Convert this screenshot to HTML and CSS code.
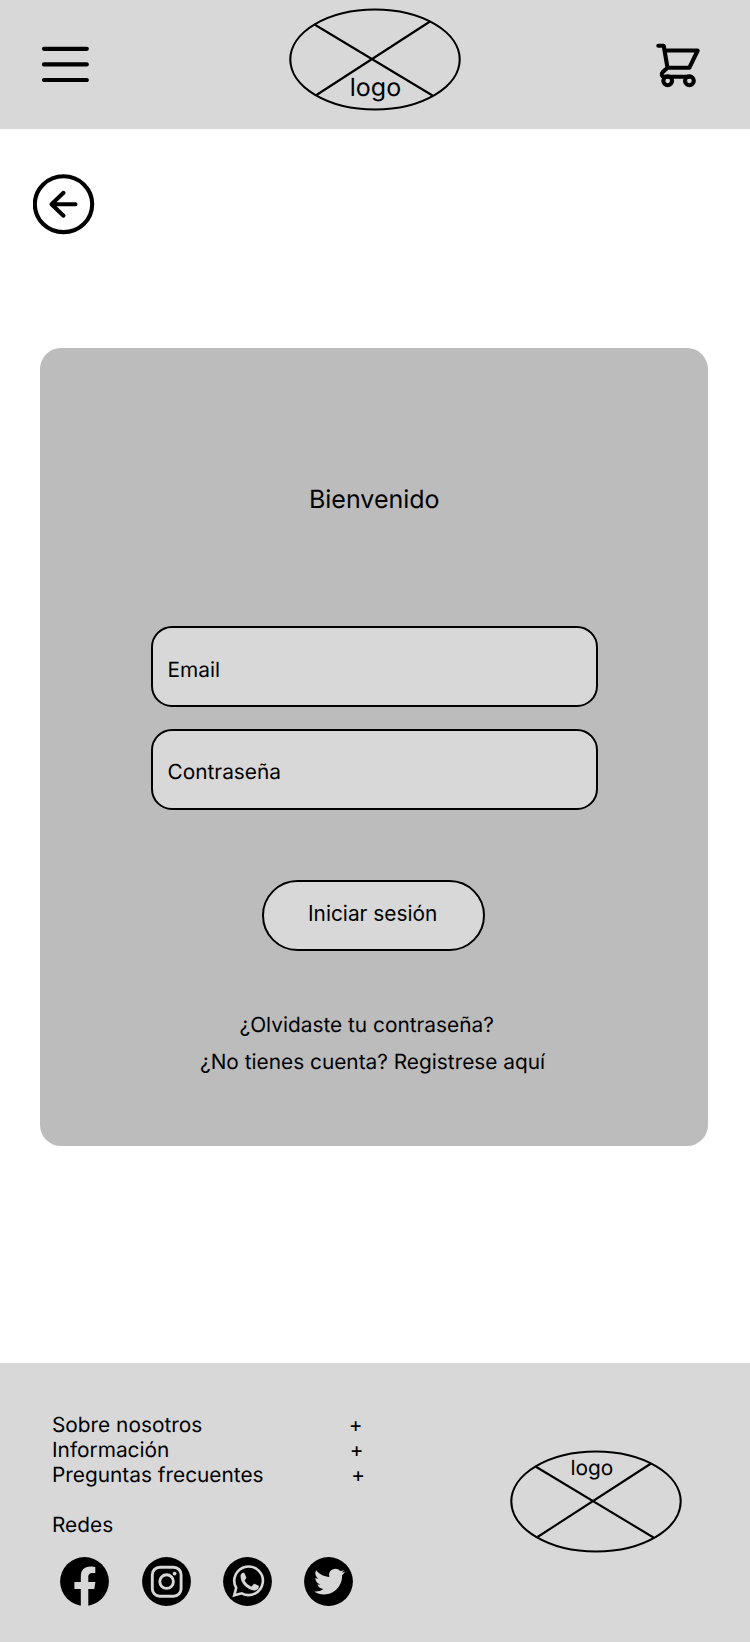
FILE: index.html
```html
<!DOCTYPE html>
<html lang="es">
<head>
<meta charset="utf-8">
<title>Bienvenido</title>
<link rel="stylesheet" href="styles.css">
</head>
<body>
<header class="header">
  <svg class="menu" width="48" height="36" viewBox="0 0 48 36"><path d="M3 2.8h42.8M3 18.4h42.8M3 34h42.8"/></svg>
  <svg class="logo" width="172" height="103" viewBox="0 0 172 103">
    <ellipse cx="86" cy="51.5" rx="84.7" ry="50"/>
    <path d="M25.5 16.5 143.5 87.5M141 13.5 27.5 87"/>
    <text class="logo-big" x="60.8" y="88">logo</text>
  </svg>
  <svg class="cart" width="46" height="46" viewBox="0 0 46 46"><path d="M3.3 3.7h5.4l3.8 22.1h21.8l8.4-17.3H9.7M12.5 25.8l-4.8 4.3c-2.2 2.4-.8 4.6 1.5 4.6h25"/><circle cx="12.7" cy="38.8" r="4.4"/><circle cx="34.4" cy="38.8" r="4.4"/></svg>
</header>
<main class="main">
  <a class="back" href="#" aria-label="Volver"><svg width="62" height="61" viewBox="0 0 62 61"><ellipse cx="30.5" cy="30.2" rx="28.7" ry="27.9"/><path d="M42.5 30.2H19M30.5 18.8 18.5 30.2 30.5 41.7"/></svg></a>
  <form class="card">
    <h1 class="title">Bienvenido</h1>
    <label class="field">Email</label>
    <label class="field password">Contraseña</label>
    <button class="submit" type="button">Iniciar sesión</button>
    <a class="link forgot" href="#">¿Olvidaste tu contraseña?</a>
    <a class="link register" href="#">¿No tienes cuenta? Registrese aquí</a>
  </form>
</main>
<footer class="footer">
  <div class="info">
    <div class="row row-about"><span>Sobre nosotros</span><span>+</span></div>
    <div class="row row-info"><span>Información</span><span>+</span></div>
    <div class="row row-faq"><span>Preguntas frecuentes</span><span>+</span></div>
    <div class="networks">Redes</div>
    <div class="social">
      <svg class="facebook" width="49" height="49" viewBox="0 0 49 49"><circle cx="24.5" cy="24.5" r="24.4"/><path class="light" d="M20.8 50V31.9h-6.4v-7h6.4v-5.5c0-6.3 3.7-9.8 9.5-9.8 2.8 0 5 .5 5 .5v6h-2.8c-3.2 0-4.2 1.8-4.2 3.9v4.9h7.1l-1.1 7h-6V50z"/></svg>
      <svg width="49" height="49" viewBox="0 0 49 49"><circle cx="24.5" cy="24.5" r="24.4"/><g class="line"><rect x="10.3" y="10.2" width="28.8" height="29" rx="7.5"/><circle cx="24.6" cy="24.6" r="6.8"/></g><circle class="light" cx="32.6" cy="16.6" r="1.9"/></svg>
      <svg width="49" height="49" viewBox="0 0 49 49"><circle cx="24.5" cy="24.5" r="24.4"/><path class="line thin" d="M11.2 38.3l2-7.4a14.3 14.3 0 1 1 5.5 5.4z"/><path class="light" d="M17.6 18.6c.1-1.4 1.3-2.8 2.5-2.8 1 0 1.4.3 1.8 1.2l1.3 3.2c.3.9-.2 1.5-1.3 2.8-.3.4-.2.7 0 1.1 1.5 2.6 3.4 4.2 6.1 5.3.5.2.8.1 1.1-.3l1.5-1.8c.4-.5.8-.6 1.4-.3l3.2 1.5c.6.3.8.6.6 1.6-.3 2.3-2.6 3.5-4.6 3.4-3-.1-7.1-2.1-10.1-5.5-2.4-2.7-3.7-5.7-3.5-9.4z"/></svg>
      <svg width="49" height="49" viewBox="0 0 49 49"><circle cx="24.5" cy="24.5" r="24.4"/><path class="light" d="M41.2 14.6c-1.2.5-2.3.9-3.6 1a6.2 6.2 0 0 0 2.3-2.7c-1.2.7-2.3 1-3.6 1.2a6.3 6.3 0 0 0-10.9 5.8c-5.3-.3-10-2.8-13.2-6.7a6.4 6.4 0 0 0 2 8.5c-1 0-2-.3-2.9-.8 0 3.1 2.2 5.8 5.1 6.4-.9.3-1.9.3-2.9.1.8 2.6 3.2 4.4 6 4.5a12.8 12.8 0 0 1-9.4 2.6c2.8 1.9 6.2 2.9 9.8 2.9 11.9 0 18.5-10 18.2-19.2 1.2-.9 2.3-2.2 3.1-3.6z"/></svg>
    </div>
  </div>
  <svg class="logo" width="172" height="103" viewBox="0 0 172 103">
    <ellipse cx="86" cy="51.5" rx="84.7" ry="50"/>
    <path d="M25.5 16.5 143.5 87.5M141 13.5 27.5 87"/>
    <text class="logo-small" x="60.5" y="25">logo</text>
  </svg>
</footer>
</body>
</html>
```

FILE: styles.css
```css
* { box-sizing: border-box; }
body {
  margin: 0;
  width: 750px;
  height: 1642px;
  display: flex;
  flex-direction: column;
  background: #fff;
  color: #000;
  font: 20.83px/25px Inter, sans-serif;
  text-rendering: geometricPrecision;
}
svg { display: block; flex: none; fill: none; stroke: #000; }
a { color: inherit; text-decoration: none; }

.header {
  height: 129px;
  padding: 8px 49px 0 41px;
  display: flex;
  justify-content: space-between;
  align-items: flex-start;
  background: #d8d8d8;
}
.menu { margin-top: 38px; stroke-width: 4.2; stroke-linecap: round; }
.header .logo { margin-left: 200px; margin-right: auto; }
.logo { stroke-width: 2.1; }
.logo text { fill: #000; stroke: none; }
.logo-big { font-size: 25px; }
.logo-small { font-size: 20.83px; }
.cart { margin-top: 34px; stroke-width: 4.1; stroke-linecap: round; stroke-linejoin: round; }

.main { height: 1234px; padding: 45px 42px 0 39.5px; }
.back { display: block; width: 62px; margin-left: -6.5px; }
.back svg { stroke-width: 4.1; stroke-linecap: round; stroke-linejoin: round; }
.card {
  height: 798px;
  margin-top: 113px;
  padding: 137px 110px 0 111px;
  display: flex;
  flex-direction: column;
  border-radius: 21px;
  background: #bcbcbc;
}
.title {
  margin: 0 0 111px;
  text-align: center;
  font-size: 25px;
  line-height: 30px;
  font-weight: 400;
}
.field {
  height: 81px;
  margin-bottom: 22px;
  padding: 30px 15px 0;
  border: 2px solid #000;
  border-radius: 21px;
  background: #d8d8d8;
}
.password { padding-top: 29px; }
.submit {
  width: 223px;
  height: 71px;
  margin: 48px 0 0 111.5px;
  padding: 0 0 4px 44px;
  border: 2px solid #000;
  border-radius: 36px;
  background: #d8d8d8;
  color: #000;
  font: inherit;
  text-align: left;
}
.link { white-space: nowrap; }
.forgot { margin: 62px 0 0 89px; }
.register { margin: 12px 0 0 49.5px; }

.footer {
  flex: 1;
  padding: 50px 68px 0 52px;
  display: flex;
  justify-content: space-between;
  align-items: flex-start;
  background: #d8d8d8;
}
.info { width: 313px; }
.row { display: flex; justify-content: space-between; }
.row-about { padding-right: 2.5px; }
.row-info { padding-right: 1.5px; }
.networks { margin-top: 25px; }
.social { display: flex; gap: 32px; margin: 19px 0 0 8px; }
.social svg { fill: #000; stroke: none; }
.facebook { margin-right: 1px; }
.social .light { fill: #d8d8d8; }
.social .line { fill: none; stroke: #d8d8d8; stroke-width: 2.9; }
.social .thin { stroke-width: 2.6; }
.footer .logo { margin-top: 36.5px; }
```
